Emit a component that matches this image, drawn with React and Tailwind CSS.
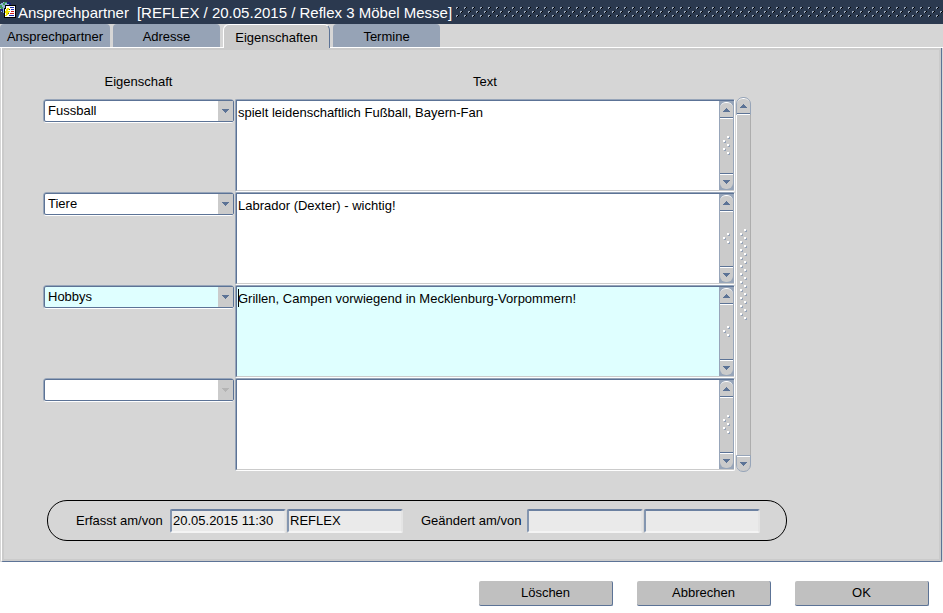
import { useState } from 'react';

const tabs = ['Ansprechpartner', 'Adresse', 'Eigenschaften', 'Termine'];

const initialRows = [
  { id: 1, type: 'Fussball', text: 'spielt leidenschaftlich Fußball, Bayern-Fan', grip: 5 },
  { id: 2, type: 'Tiere', text: 'Labrador (Dexter) - wichtig!', grip: 3 },
  { id: 3, type: 'Hobbys', text: 'Grillen, Campen vorwiegend in Mecklenburg-Vorpommern!', grip: 3 },
  { id: 4, type: '', text: '', grip: 5 },
];

const AppIcon = () => (
  <svg width="16" height="18" viewBox="0 0 16 18" shapeRendering="crispEdges" className="self-start" aria-hidden="true">
    <path d="M3 2h5v1h2v3H8v3H5v4H3v-1H1V9H0V4h1V3h2z" fill="#8fb4d8" />
    <path d="M4 2h3v1H5v2H3V3h1zM0 5h2v2h1v2H1V8H0z" fill="#3f9a5c" />
    <path d="M7 2h3v1h1v2H9V4H7zM1 9h2v3H2v-1H1z" fill="#17247c" />
    <path d="M5 5h11v13H4V8h1z" fill="#000" />
    <path d="M6 6h9v11H5V9h1z" fill="#fff" />
    <path d="M7 8h2v2H8v1h2v1H9v1H8v2H7v1H5v-1h1v-2H5v-2h1V9h1z" fill="#f2e500" />
    <path d="M9 9h1v1H9zM8 13h1v1H8z" fill="#5a4b00" />
    <path d="M10 7h4v1h-4zM11 9h3v1h-3zM9 15h5v1H9z" fill="#1b2fae" />
    <path d="M11 11h3v1h-3zM10 13h4v1h-4z" fill="#d01c1c" />
  </svg>
);

const TitleDots = () => (
  <svg className="h-6 min-w-0 flex-1" aria-hidden="true" shapeRendering="crispEdges">
    <defs>
      <pattern id="title-dots" width="8" height="8" patternUnits="userSpaceOnUse" y="7">
        <path d="M0 0h2v1H1v1H0zM4 4h2v1H5v1H4z" fill="#97a5b9" />
        <path d="M2 0h1v1H2v1H1V1h1zM6 4h1v1H6v1H5V5h1z" fill="#000" />
      </pattern>
    </defs>
    <rect y="7" width="100%" height="10" fill="url(#title-dots)" />
  </svg>
);

const Grip = ({ count }) => (
  <svg width="7" height={count * 4} aria-hidden="true" shapeRendering="crispEdges">
    {Array.from({ length: count }, (_, i) => {
      const x = i % 2 === 0 ? 4 : 0;
      const y = i * 4;
      return (
        <g key={i}>
          <path d={`M${x + 1} ${y + 2}h1v-1h1v2h-2z`} fill="#97a5b9" />
          <path d={`M${x} ${y}h2v2h-2z`} fill="#fff" />
        </g>
      );
    })}
  </svg>
);

const Arrow = ({ up, className = 'fill-[#5c7396]' }) => (
  <svg width="7" height="4" viewBox="0 0 7 4" shapeRendering="crispEdges" className={className} aria-hidden="true">
    <path d={up ? 'M3 0h1v1h1v1h1v1h1v1H0V3h1V2h1V1h1z' : 'M0 0h7v1H6v1H5v1H4v1H3V3H2V2H1V1H0z'} />
  </svg>
);

const ScrollBar = ({ grip, outer }) => (
  <div
    className={`flex w-[15px] shrink-0 flex-col ${
      outer ? 'rounded-full border-l border-white bg-[#adadad] pr-px' : 'bg-[#97a5b9] p-px'
    }`}
  >
    <button
      type="button"
      aria-label="Nach oben"
      className={`flex h-4 shrink-0 items-center justify-center rounded-t-md border-t border-b border-t-white border-b-[#5c7396] bg-[#cbcbcb] ${
        outer ? 'outline outline-[#97a5b9]' : ''
      }`}
    >
      <Arrow up />
    </button>
    <div
      className={`flex flex-1 items-center justify-center border-t border-white bg-[#cbcbcb] ${
        outer ? 'pb-5' : ''
      }`}
    >
      <Grip count={grip} />
    </div>
    <div className="h-px bg-[#5c7396]" />
    <button
      type="button"
      aria-label="Nach unten"
      className={`flex h-[15px] shrink-0 items-center justify-center rounded-b-md border-t border-white bg-[#cbcbcb] ${
        outer ? 'outline outline-[#97a5b9]' : ''
      }`}
    >
      <Arrow />
    </button>
  </div>
);

const PropertyRow = ({ row, active, onFocus, onChange }) => {
  const bg = active ? 'bg-[#dfffff]' : 'bg-white';

  return (
    <div className="flex h-[93px] items-start gap-px" onFocus={onFocus}>
      <div className="w-[191px] shrink-0 rounded-sm border-t border-b border-l border-t-[#97a5b9] border-b-white border-l-[#97a5b9]">
        <div className={`relative rounded-xs border border-[#5c7396] ${bg}`}>
          <select
            aria-label="Eigenschaft"
            value={row.type}
            onChange={(e) => onChange({ ...row, type: e.target.value })}
            className="block h-5 w-full appearance-none pr-5 pl-[3px] leading-5 outline-none"
          >
            <option value=""></option>
            <option>Fussball</option>
            <option>Tiere</option>
            <option>Hobbys</option>
          </select>
          <span className="pointer-events-none absolute inset-y-0 right-0 flex w-[15px] items-center justify-center bg-[#cbcbcb]">
            <Arrow className={row.type ? 'fill-[#5c7396]' : 'fill-[#b4b4b4]'} />
          </span>
        </div>
      </div>
      <div className="h-full min-w-0 flex-1 rounded-xs border border-t-[#97a5b9] border-r-white border-b-white border-l-[#97a5b9]">
        <div className="flex h-full border-t border-b border-l border-t-[#5c7396] border-b-[#cbcbcb] border-l-[#5c7396]">
          <div className={`relative flex min-w-0 flex-1 ${bg}`}>
            <textarea
              aria-label="Text"
              value={row.text}
              onChange={(e) => onChange({ ...row, text: e.target.value })}
              className="w-full resize-none overflow-hidden px-px pt-1 leading-4 outline-none"
            />
            {active && <span className="absolute top-0.5 left-px h-[18px] w-px bg-black" />}
          </div>
          <ScrollBar grip={row.grip} />
        </div>
      </div>
    </div>
  );
};

const StampField = ({ label, value }) => (
  <input
    readOnly
    aria-label={label}
    defaultValue={value}
    className="h-6 w-[116px] rounded-xs border-2 border-t-[#6c81a1] border-r-[#e4e4e4] border-b-[#f4f4f4] border-l-[#8496b0] bg-[#eaeaea] px-px outline-none"
  />
);

const App = () => {
  const [activeTab, setActiveTab] = useState('Eigenschaften');
  const [rows, setRows] = useState(initialRows);
  const [activeRow, setActiveRow] = useState(3);

  const updateRow = (changed) => {
    setRows(rows.map((row) => (row.id === changed.id ? changed : row)));
  };

  return (
    <div className="min-h-screen bg-white font-['Liberation_Sans',Arial,sans-serif] text-[13px] text-black">
      {/* Title bar */}
      <header className="flex h-6 items-center bg-[#2b394f] text-white">
        <AppIcon />
        <h1 className="ml-0.5 flex gap-2 pt-0.5 text-[15px] whitespace-nowrap">
          <span>Ansprechpartner</span>
          <span>[REFLEX / 20.05.2015 / Reflex 3 Möbel Messe]</span>
        </h1>
        <div className="ml-1 flex min-w-0 flex-1">
          <TitleDots />
        </div>
      </header>

      {/* Tabs */}
      <div className="bg-[#d6d6d6]">
        <div role="tablist" className="flex h-6 items-start gap-[3px] border-b border-white">
          {tabs.map((tab) => (
            <button
              key={tab}
              type="button"
              role="tab"
              aria-selected={tab === activeTab}
              onClick={() => setActiveTab(tab)}
              className={
                tab === activeTab
                  ? 'relative z-10 h-6 w-[107px] rounded-t-md border-t border-r border-l border-t-white border-r-[#5c7396] border-l-white bg-[#cbcbcb] pt-0.5'
                  : 'h-[23px] w-[107px] rounded-t-sm bg-[#96a3b6] pt-[3px] first:w-[110px]'
              }
            >
              {tab}
            </button>
          ))}
        </div>
      </div>

      {/* Tab panel */}
      <div className="bg-[#d6d6d6] px-px">
        <main className="rounded-b-xs border-r border-b border-l border-r-[#5c7396] border-b-[#5c7396] border-l-white bg-[#cbcbcb] p-0.5">
          <div className="bg-[#d6d6d6] px-[39px] pt-6 pb-[18px]">
            <div className="flex max-w-[708px] gap-px pb-2">
              <div className="w-[191px] shrink-0 text-center leading-4">Eigenschaft</div>
              <div className="flex-1 pr-4 text-center leading-4">Text</div>
            </div>
            <div className="flex max-w-[708px] gap-px">
              <div className="min-w-0 flex-1 pt-px">
                {rows.map((row) => (
                  <PropertyRow
                    key={row.id}
                    row={row}
                    active={row.id === activeRow}
                    onFocus={() => setActiveRow(row.id)}
                    onChange={updateRow}
                  />
                ))}
              </div>
              <ScrollBar grip={23} outer />
            </div>

            <div className="mt-[29px] ml-1 flex h-[41px] max-w-[740px] items-center rounded-[20px] border border-black pl-7">
              <span className="w-[94px]">Erfasst am/von</span>
              <div className="flex gap-px">
                <StampField label="Erfasst am" value="20.05.2015 11:30" />
                <StampField label="Erfasst von" value="REFLEX" />
              </div>
              <span className="ml-[18px] w-[106px]">Geändert am/von</span>
              <div className="flex gap-px">
                <StampField label="Geändert am" value="" />
                <StampField label="Geändert von" value="" />
              </div>
            </div>
          </div>
        </main>
      </div>

      {/* Actions */}
      <footer className="flex justify-end gap-6 pt-[19px] pr-3.5">
        {['Löschen', 'Abbrechen', 'OK'].map((label) => (
          <button
            key={label}
            type="button"
            className="h-[25px] w-[134px] rounded-xs border-r border-b border-[#5c7396] bg-[#c0c0c0]"
          >
            {label}
          </button>
        ))}
      </footer>
    </div>
  );
};

export default App;
